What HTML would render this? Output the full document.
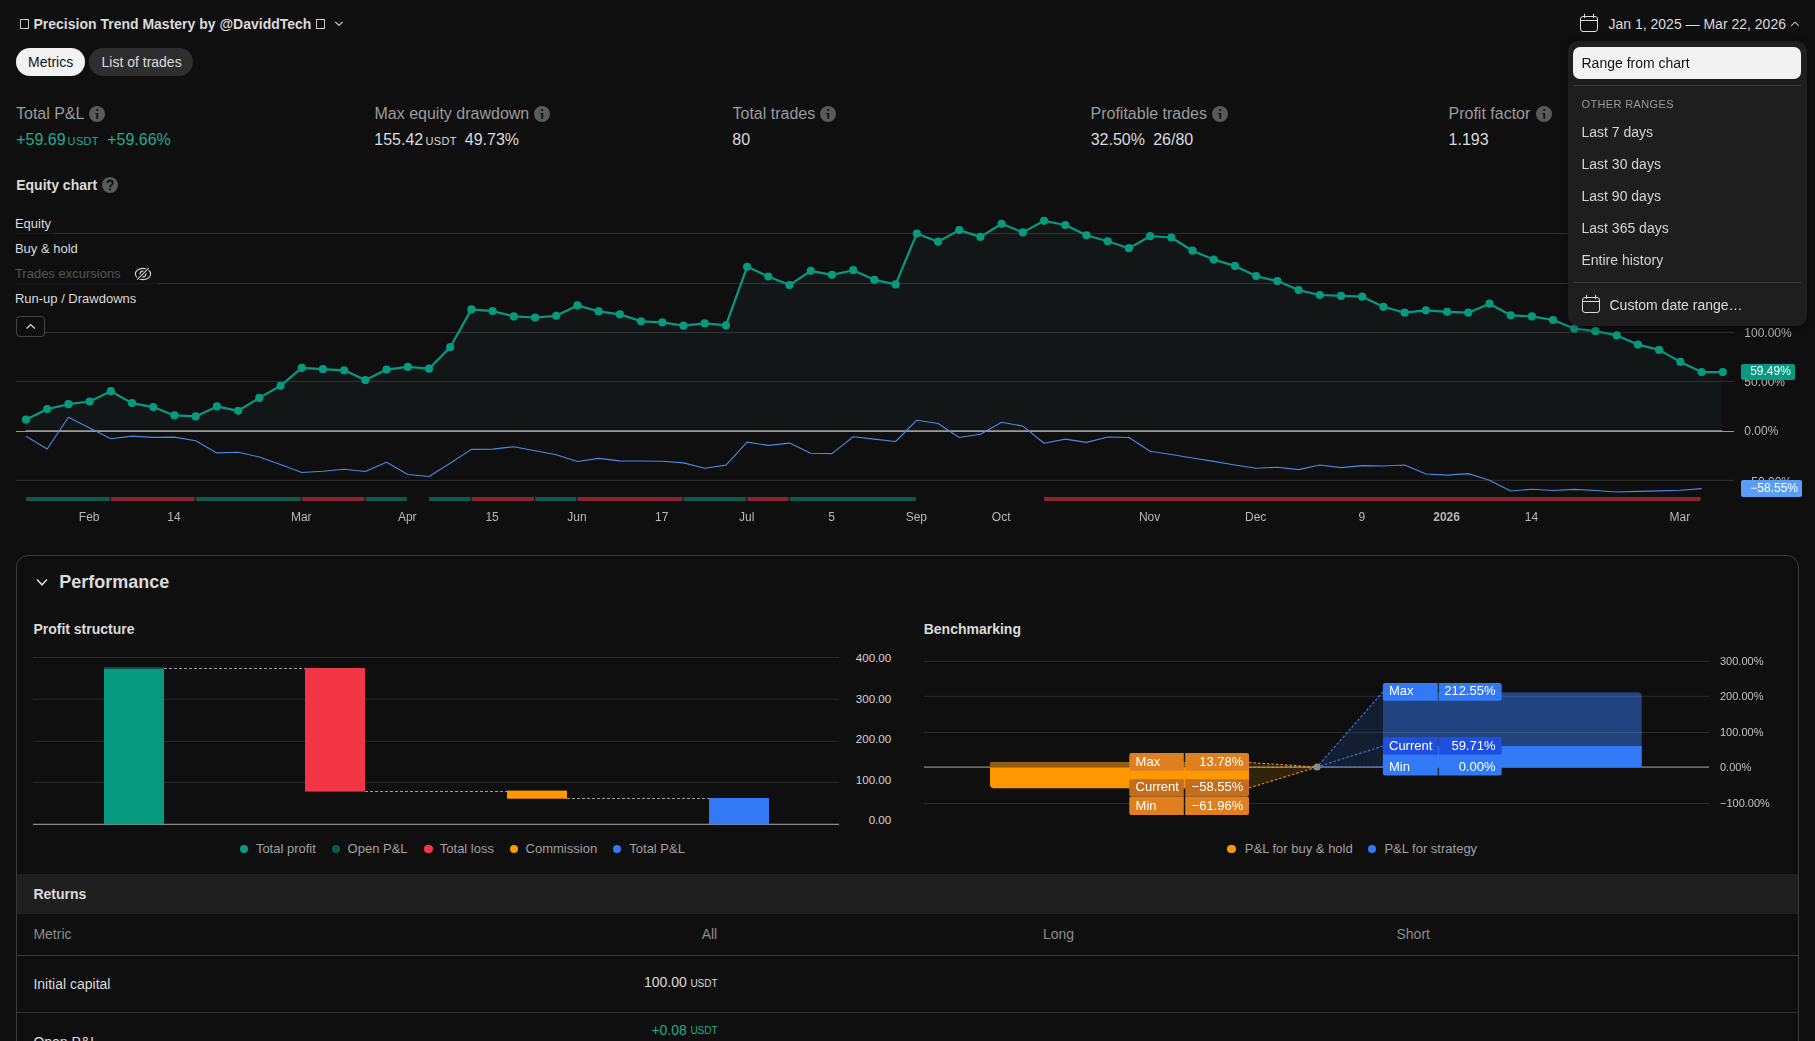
<!DOCTYPE html>
<html><head><meta charset="utf-8"><title>Strategy report</title>
<style>
html,body{margin:0;padding:0;}
body{width:1815px;height:1041px;overflow:hidden;background:#0f0f0f;position:relative;font-family:"Liberation Sans",sans-serif;}
.t{position:absolute;white-space:nowrap;}
svg{overflow:visible;}
</style></head><body>
<div style="position:absolute;left:20.00px;top:19.00px;width:9.00px;height:10.00px;background:transparent;box-sizing:border-box;border:1px solid #c8c8c8;"></div>
<div class="t" style="left:33.50px;top:16.65px;font-size:14px;line-height:14px;color:#dbdbdb;font-weight:700;">Precision Trend Mastery by @DaviddTech</div>
<div style="position:absolute;left:316.00px;top:19.00px;width:9.00px;height:10.00px;background:transparent;box-sizing:border-box;border:1px solid #c8c8c8;"></div>
<svg style="position:absolute;left:333px;top:19px" width="12" height="10" viewBox="0 0 12 10"><path d="M2.3 2.8 L6 6.5 L9.7 2.8" fill="none" stroke="#c8c8c8" stroke-width="1.2"/></svg>
<svg style="position:absolute;left:1580px;top:13px" width="20" height="20" viewBox="0 0 20 20"><rect x="0.5" y="3.5" width="17" height="15" rx="2.5" fill="none" stroke="#dcdcdc" stroke-width="1"/><path d="M0.5 7.5 H17.5 M4.5 0.8 V5 M13.5 0.8 V5" stroke="#dcdcdc" stroke-width="1"/></svg>
<div class="t" style="left:1608.50px;top:17.15px;font-size:14px;line-height:14px;color:#dbdbdb;">Jan 1, 2025 — Mar 22, 2026</div>
<svg style="position:absolute;left:1789px;top:19px" width="12" height="10" viewBox="0 0 12 10"><path d="M2.2 6.9 L6 3.2 L9.8 6.9" fill="none" stroke="#c4c4c4" stroke-width="1.1"/></svg>
<div style="position:absolute;left:16.00px;top:48.00px;width:69.00px;height:28.00px;background:#f2f2f2;border-radius:14px;"></div>
<div class="t" style="left:28.10px;top:55.15px;font-size:14px;line-height:14px;color:#131313;">Metrics</div>
<div style="position:absolute;left:89.00px;top:48.00px;width:104.00px;height:28.00px;background:#2e2e2e;border-radius:14px;"></div>
<div class="t" style="left:101.50px;top:55.15px;font-size:14px;line-height:14px;color:#dbdbdb;">List of trades</div>
<div class="t" style="left:16.00px;top:105.86px;font-size:16px;line-height:16px;color:#9b9b9b;white-space:nowrap;">Total P&amp;L</div>
<div class="t" style="left:374.50px;top:105.86px;font-size:16px;line-height:16px;color:#9b9b9b;white-space:nowrap;">Max equity drawdown</div>
<div class="t" style="left:732.50px;top:105.86px;font-size:16px;line-height:16px;color:#9b9b9b;white-space:nowrap;">Total trades</div>
<div class="t" style="left:1090.50px;top:105.86px;font-size:16px;line-height:16px;color:#9b9b9b;white-space:nowrap;">Profitable trades</div>
<div class="t" style="left:1448.50px;top:105.86px;font-size:16px;line-height:16px;color:#9b9b9b;white-space:nowrap;">Profit factor</div>
<svg style="position:absolute;left:88.80px;top:106.00px" width="16" height="16" viewBox="0 0 16 16"><circle cx="8" cy="8" r="8" fill="#5a5a5a"/><rect x="7.3" y="7" width="1.9" height="5.8" fill="#111"/><rect x="6.2" y="7" width="1.3" height="1.1" fill="#111"/><rect x="7.2" y="3.1" width="2" height="1.8" fill="#111"/></svg>
<svg style="position:absolute;left:533.80px;top:106.00px" width="16" height="16" viewBox="0 0 16 16"><circle cx="8" cy="8" r="8" fill="#5a5a5a"/><rect x="7.3" y="7" width="1.9" height="5.8" fill="#111"/><rect x="6.2" y="7" width="1.3" height="1.1" fill="#111"/><rect x="7.2" y="3.1" width="2" height="1.8" fill="#111"/></svg>
<svg style="position:absolute;left:820.00px;top:106.00px" width="16" height="16" viewBox="0 0 16 16"><circle cx="8" cy="8" r="8" fill="#5a5a5a"/><rect x="7.3" y="7" width="1.9" height="5.8" fill="#111"/><rect x="6.2" y="7" width="1.3" height="1.1" fill="#111"/><rect x="7.2" y="3.1" width="2" height="1.8" fill="#111"/></svg>
<svg style="position:absolute;left:1212.00px;top:106.00px" width="16" height="16" viewBox="0 0 16 16"><circle cx="8" cy="8" r="8" fill="#5a5a5a"/><rect x="7.3" y="7" width="1.9" height="5.8" fill="#111"/><rect x="6.2" y="7" width="1.3" height="1.1" fill="#111"/><rect x="7.2" y="3.1" width="2" height="1.8" fill="#111"/></svg>
<svg style="position:absolute;left:1536.20px;top:106.00px" width="16" height="16" viewBox="0 0 16 16"><circle cx="8" cy="8" r="8" fill="#5a5a5a"/><rect x="7.3" y="7" width="1.9" height="5.8" fill="#111"/><rect x="6.2" y="7" width="1.3" height="1.1" fill="#111"/><rect x="7.2" y="3.1" width="2" height="1.8" fill="#111"/></svg>
<div class="t" style="left:16.20px;top:131.66px;font-size:16px;line-height:16px;color:#22ab94;">+59.69</div>
<div class="t" style="left:67.60px;top:135.89px;font-size:11px;line-height:11px;color:#22ab94;letter-spacing:0.35px;">USDT</div>
<div class="t" style="left:107.20px;top:131.66px;font-size:16px;line-height:16px;color:#22ab94;">+59.66%</div>
<div class="t" style="left:374.30px;top:131.66px;font-size:16px;line-height:16px;color:#dbdbdb;">155.42</div>
<div class="t" style="left:425.50px;top:135.89px;font-size:11px;line-height:11px;color:#dbdbdb;letter-spacing:0.35px;">USDT</div>
<div class="t" style="left:464.80px;top:131.66px;font-size:16px;line-height:16px;color:#dbdbdb;">49.73%</div>
<div class="t" style="left:732.30px;top:131.66px;font-size:16px;line-height:16px;color:#dbdbdb;">80</div>
<div class="t" style="left:1090.70px;top:131.66px;font-size:16px;line-height:16px;color:#dbdbdb;">32.50%</div>
<div class="t" style="left:1153.20px;top:131.66px;font-size:16px;line-height:16px;color:#dbdbdb;">26/80</div>
<div class="t" style="left:1448.60px;top:131.66px;font-size:16px;line-height:16px;color:#dbdbdb;">1.193</div>
<div class="t" style="left:16.20px;top:177.75px;font-size:14px;line-height:14px;color:#dbdbdb;font-weight:700;">Equity chart</div>
<svg style="position:absolute;left:101.80px;top:177.30px" width="16" height="16" viewBox="0 0 16 16"><circle cx="8" cy="8" r="8" fill="#5a5a5a"/><path d="M5.5 6.1 C5.5 4.5 6.6 3.5 8.1 3.5 C9.6 3.5 10.7 4.5 10.7 5.9 C10.7 7.3 9.6 7.8 8.8 8.4 C8.2 8.8 8.1 9.2 8.1 10.3" fill="none" stroke="#111" stroke-width="1.8"/><rect x="7.1" y="11.4" width="2" height="1.9" fill="#111"/></svg>
<svg style="position:absolute;left:0;top:0" width="1815" height="1041"><line x1="16" y1="233.4" x2="1734" y2="233.4" stroke="#303030" stroke-width="1"/><line x1="16" y1="283.5" x2="1734" y2="283.5" stroke="#303030" stroke-width="1"/><line x1="16" y1="332.5" x2="1734" y2="332.5" stroke="#303030" stroke-width="1"/><line x1="16" y1="381.4" x2="1734" y2="381.4" stroke="#303030" stroke-width="1"/><line x1="16" y1="480.4" x2="1734" y2="480.4" stroke="#303030" stroke-width="1"/><polygon points="25.60,431 25.60,419.70 26.00,419.70 47.21,409.10 68.42,404.20 89.63,401.50 110.84,391.20 132.05,403.10 153.26,407.10 174.47,415.40 195.68,416.40 216.89,406.40 238.10,410.80 259.31,397.90 280.52,385.80 301.73,367.90 322.94,369.20 344.15,370.30 365.36,380.10 386.57,369.60 407.78,366.90 428.99,368.70 450.20,347.20 471.41,309.40 492.62,311.10 513.83,316.40 535.04,317.50 556.25,315.80 577.46,305.40 598.67,311.40 619.88,314.40 641.09,321.30 662.30,322.40 683.51,325.70 704.72,323.40 725.93,325.40 747.14,266.80 768.35,276.50 789.56,285.10 810.77,270.80 831.98,274.80 853.19,270.20 874.40,279.80 895.61,284.40 916.82,233.50 938.03,241.70 959.24,230.10 980.45,236.90 1001.66,223.80 1022.87,232.40 1044.08,220.80 1065.29,225.00 1086.50,235.30 1107.71,241.30 1128.92,248.20 1150.13,236.20 1171.34,237.50 1192.55,250.70 1213.76,259.60 1234.97,265.90 1256.18,276.10 1277.39,281.10 1298.60,290.10 1319.81,295.00 1341.02,295.90 1362.23,296.70 1383.44,306.80 1404.65,312.70 1425.86,310.30 1447.07,311.80 1468.28,312.70 1489.49,303.70 1510.70,315.30 1531.91,316.40 1553.12,320.00 1574.33,328.60 1595.54,331.20 1616.75,335.40 1637.96,344.60 1659.17,349.90 1680.38,361.90 1701.59,372.10 1722.80,372.10 1722.20,372.10 1722.20,431" fill="#4f8a80" fill-opacity="0.06"/><rect x="16" y="431" width="1718" height="1" fill="#999999"/><rect x="25.60" y="430" width="1696.60" height="1" fill="#7c7c7c"/><polyline points="26.00,436.30 47.21,449.00 68.42,417.30 89.63,428.10 110.84,438.70 132.05,436.10 153.26,437.40 174.47,437.10 195.68,440.70 216.89,452.90 238.10,452.20 259.31,457.00 280.52,464.60 301.73,472.50 322.94,471.20 344.15,469.20 365.36,471.50 386.57,462.20 407.78,474.50 428.99,476.50 450.20,463.30 471.41,449.40 492.62,449.10 513.83,446.70 535.04,450.70 556.25,454.70 577.46,461.50 598.67,458.40 619.88,460.90 641.09,461.00 662.30,461.30 683.51,462.90 704.72,468.20 725.93,465.10 747.14,442.10 768.35,445.40 789.56,443.10 810.77,453.20 831.98,453.60 853.19,436.70 874.40,439.10 895.61,441.50 916.82,420.20 938.03,423.50 959.24,437.50 980.45,434.20 1001.66,422.20 1022.87,426.10 1044.08,443.30 1065.29,439.10 1086.50,442.40 1107.71,437.00 1128.92,437.50 1150.13,451.20 1171.34,454.50 1192.55,458.00 1213.76,461.40 1234.97,465.00 1256.18,468.30 1277.39,467.30 1298.60,469.60 1319.81,465.00 1341.02,467.60 1362.23,465.60 1383.44,466.00 1404.65,465.00 1425.86,474.00 1447.07,475.10 1468.28,473.60 1489.49,480.20 1510.70,491.00 1531.91,489.20 1553.12,490.50 1574.33,489.40 1595.54,490.50 1616.75,492.00 1637.96,491.40 1659.17,490.90 1680.38,490.20 1701.59,488.60" fill="none" stroke="#4a8ae6" stroke-width="1.1" stroke-linejoin="round"/><polyline points="26.00,419.70 47.21,409.10 68.42,404.20 89.63,401.50 110.84,391.20 132.05,403.10 153.26,407.10 174.47,415.40 195.68,416.40 216.89,406.40 238.10,410.80 259.31,397.90 280.52,385.80 301.73,367.90 322.94,369.20 344.15,370.30 365.36,380.10 386.57,369.60 407.78,366.90 428.99,368.70 450.20,347.20 471.41,309.40 492.62,311.10 513.83,316.40 535.04,317.50 556.25,315.80 577.46,305.40 598.67,311.40 619.88,314.40 641.09,321.30 662.30,322.40 683.51,325.70 704.72,323.40 725.93,325.40 747.14,266.80 768.35,276.50 789.56,285.10 810.77,270.80 831.98,274.80 853.19,270.20 874.40,279.80 895.61,284.40 916.82,233.50 938.03,241.70 959.24,230.10 980.45,236.90 1001.66,223.80 1022.87,232.40 1044.08,220.80 1065.29,225.00 1086.50,235.30 1107.71,241.30 1128.92,248.20 1150.13,236.20 1171.34,237.50 1192.55,250.70 1213.76,259.60 1234.97,265.90 1256.18,276.10 1277.39,281.10 1298.60,290.10 1319.81,295.00 1341.02,295.90 1362.23,296.70 1383.44,306.80 1404.65,312.70 1425.86,310.30 1447.07,311.80 1468.28,312.70 1489.49,303.70 1510.70,315.30 1531.91,316.40 1553.12,320.00 1574.33,328.60 1595.54,331.20 1616.75,335.40 1637.96,344.60 1659.17,349.90 1680.38,361.90 1701.59,372.10 1722.80,372.10" fill="none" stroke="#089981" stroke-width="2.2" stroke-linejoin="round"/><circle cx="26.00" cy="419.70" r="4.1" fill="#089981"/><circle cx="47.21" cy="409.10" r="4.1" fill="#089981"/><circle cx="68.42" cy="404.20" r="4.1" fill="#089981"/><circle cx="89.63" cy="401.50" r="4.1" fill="#089981"/><circle cx="110.84" cy="391.20" r="4.1" fill="#089981"/><circle cx="132.05" cy="403.10" r="4.1" fill="#089981"/><circle cx="153.26" cy="407.10" r="4.1" fill="#089981"/><circle cx="174.47" cy="415.40" r="4.1" fill="#089981"/><circle cx="195.68" cy="416.40" r="4.1" fill="#089981"/><circle cx="216.89" cy="406.40" r="4.1" fill="#089981"/><circle cx="238.10" cy="410.80" r="4.1" fill="#089981"/><circle cx="259.31" cy="397.90" r="4.1" fill="#089981"/><circle cx="280.52" cy="385.80" r="4.1" fill="#089981"/><circle cx="301.73" cy="367.90" r="4.1" fill="#089981"/><circle cx="322.94" cy="369.20" r="4.1" fill="#089981"/><circle cx="344.15" cy="370.30" r="4.1" fill="#089981"/><circle cx="365.36" cy="380.10" r="4.1" fill="#089981"/><circle cx="386.57" cy="369.60" r="4.1" fill="#089981"/><circle cx="407.78" cy="366.90" r="4.1" fill="#089981"/><circle cx="428.99" cy="368.70" r="4.1" fill="#089981"/><circle cx="450.20" cy="347.20" r="4.1" fill="#089981"/><circle cx="471.41" cy="309.40" r="4.1" fill="#089981"/><circle cx="492.62" cy="311.10" r="4.1" fill="#089981"/><circle cx="513.83" cy="316.40" r="4.1" fill="#089981"/><circle cx="535.04" cy="317.50" r="4.1" fill="#089981"/><circle cx="556.25" cy="315.80" r="4.1" fill="#089981"/><circle cx="577.46" cy="305.40" r="4.1" fill="#089981"/><circle cx="598.67" cy="311.40" r="4.1" fill="#089981"/><circle cx="619.88" cy="314.40" r="4.1" fill="#089981"/><circle cx="641.09" cy="321.30" r="4.1" fill="#089981"/><circle cx="662.30" cy="322.40" r="4.1" fill="#089981"/><circle cx="683.51" cy="325.70" r="4.1" fill="#089981"/><circle cx="704.72" cy="323.40" r="4.1" fill="#089981"/><circle cx="725.93" cy="325.40" r="4.1" fill="#089981"/><circle cx="747.14" cy="266.80" r="4.1" fill="#089981"/><circle cx="768.35" cy="276.50" r="4.1" fill="#089981"/><circle cx="789.56" cy="285.10" r="4.1" fill="#089981"/><circle cx="810.77" cy="270.80" r="4.1" fill="#089981"/><circle cx="831.98" cy="274.80" r="4.1" fill="#089981"/><circle cx="853.19" cy="270.20" r="4.1" fill="#089981"/><circle cx="874.40" cy="279.80" r="4.1" fill="#089981"/><circle cx="895.61" cy="284.40" r="4.1" fill="#089981"/><circle cx="916.82" cy="233.50" r="4.1" fill="#089981"/><circle cx="938.03" cy="241.70" r="4.1" fill="#089981"/><circle cx="959.24" cy="230.10" r="4.1" fill="#089981"/><circle cx="980.45" cy="236.90" r="4.1" fill="#089981"/><circle cx="1001.66" cy="223.80" r="4.1" fill="#089981"/><circle cx="1022.87" cy="232.40" r="4.1" fill="#089981"/><circle cx="1044.08" cy="220.80" r="4.1" fill="#089981"/><circle cx="1065.29" cy="225.00" r="4.1" fill="#089981"/><circle cx="1086.50" cy="235.30" r="4.1" fill="#089981"/><circle cx="1107.71" cy="241.30" r="4.1" fill="#089981"/><circle cx="1128.92" cy="248.20" r="4.1" fill="#089981"/><circle cx="1150.13" cy="236.20" r="4.1" fill="#089981"/><circle cx="1171.34" cy="237.50" r="4.1" fill="#089981"/><circle cx="1192.55" cy="250.70" r="4.1" fill="#089981"/><circle cx="1213.76" cy="259.60" r="4.1" fill="#089981"/><circle cx="1234.97" cy="265.90" r="4.1" fill="#089981"/><circle cx="1256.18" cy="276.10" r="4.1" fill="#089981"/><circle cx="1277.39" cy="281.10" r="4.1" fill="#089981"/><circle cx="1298.60" cy="290.10" r="4.1" fill="#089981"/><circle cx="1319.81" cy="295.00" r="4.1" fill="#089981"/><circle cx="1341.02" cy="295.90" r="4.1" fill="#089981"/><circle cx="1362.23" cy="296.70" r="4.1" fill="#089981"/><circle cx="1383.44" cy="306.80" r="4.1" fill="#089981"/><circle cx="1404.65" cy="312.70" r="4.1" fill="#089981"/><circle cx="1425.86" cy="310.30" r="4.1" fill="#089981"/><circle cx="1447.07" cy="311.80" r="4.1" fill="#089981"/><circle cx="1468.28" cy="312.70" r="4.1" fill="#089981"/><circle cx="1489.49" cy="303.70" r="4.1" fill="#089981"/><circle cx="1510.70" cy="315.30" r="4.1" fill="#089981"/><circle cx="1531.91" cy="316.40" r="4.1" fill="#089981"/><circle cx="1553.12" cy="320.00" r="4.1" fill="#089981"/><circle cx="1574.33" cy="328.60" r="4.1" fill="#089981"/><circle cx="1595.54" cy="331.20" r="4.1" fill="#089981"/><circle cx="1616.75" cy="335.40" r="4.1" fill="#089981"/><circle cx="1637.96" cy="344.60" r="4.1" fill="#089981"/><circle cx="1659.17" cy="349.90" r="4.1" fill="#089981"/><circle cx="1680.38" cy="361.90" r="4.1" fill="#089981"/><circle cx="1701.59" cy="372.10" r="4.1" fill="#089981"/><circle cx="1722.80" cy="372.10" r="4.1" fill="#089981"/><rect x="26.10" y="497" width="83.74" height="4" fill="#0c5a4e"/><rect x="110.94" y="497" width="83.74" height="4" fill="#892530"/><rect x="195.78" y="497" width="104.95" height="4" fill="#0c5a4e"/><rect x="301.83" y="497" width="62.53" height="4" fill="#892530"/><rect x="365.46" y="497" width="41.32" height="4" fill="#0c5a4e"/><rect x="429.09" y="497" width="41.32" height="4" fill="#0c5a4e"/><rect x="471.51" y="497" width="62.53" height="4" fill="#892530"/><rect x="535.14" y="497" width="41.32" height="4" fill="#0c5a4e"/><rect x="577.56" y="497" width="104.95" height="4" fill="#892530"/><rect x="683.61" y="497" width="62.53" height="4" fill="#0c5a4e"/><rect x="747.24" y="497" width="41.32" height="4" fill="#892530"/><rect x="789.66" y="497" width="126.16" height="4" fill="#0c5a4e"/><rect x="1044.18" y="497" width="656.41" height="4" fill="#892530"/></svg>
<div style="position:absolute;left:14.00px;top:212.00px;width:41.00px;height:22.00px;background:rgba(15,15,15,0.6);"></div>
<div class="t" style="left:14.90px;top:217.00px;font-size:13px;line-height:13px;color:#dbdbdb;">Equity</div>
<div style="position:absolute;left:14.00px;top:237.00px;width:56.00px;height:21.00px;background:rgba(15,15,15,0.6);"></div>
<div class="t" style="left:14.90px;top:241.50px;font-size:13px;line-height:13px;color:#dbdbdb;">Buy &amp; hold</div>
<div style="position:absolute;left:14.00px;top:262.00px;width:143.00px;height:22.00px;background:rgba(15,15,15,0.6);"></div>
<div class="t" style="left:14.90px;top:266.80px;font-size:13px;line-height:13px;color:#555555;">Trades excursions</div>
<svg style="position:absolute;left:133px;top:266px" width="20" height="16" viewBox="0 0 20 16"><ellipse cx="10" cy="8" rx="7.6" ry="5.6" fill="none" stroke="#d4d4d4" stroke-width="1.1"/><circle cx="10" cy="8" r="2.9" fill="none" stroke="#d4d4d4" stroke-width="1.1"/><path d="M4.2 13.6 L15.7 2.1" stroke="#0f0f0f" stroke-width="3"/><path d="M4.2 13.6 L15.7 2.1" stroke="#d4d4d4" stroke-width="1.1"/></svg>
<div style="position:absolute;left:14.00px;top:287.00px;width:126.00px;height:21.00px;background:rgba(15,15,15,0.6);"></div>
<div class="t" style="left:14.90px;top:292.00px;font-size:13px;line-height:13px;color:#dbdbdb;">Run-up / Drawdowns</div>
<div style="position:absolute;left:16.00px;top:316.40px;width:29.00px;height:20.20px;background:#0f0f0f;box-sizing:border-box;border:1px solid #444;border-radius:4px;"></div>
<svg style="position:absolute;left:24px;top:320px" width="14" height="12" viewBox="0 0 14 12"><path d="M2.6 8.5 L6.7 4.6 L10.8 8.5" fill="none" stroke="#d8d8d8" stroke-width="1.25"/></svg>
<div style="position:absolute;left:16.00px;top:555.00px;width:1783.20px;height:545.00px;background:transparent;box-sizing:border-box;border:1px solid #3a3a3a;border-radius:12px;"></div>
<svg style="position:absolute;left:34px;top:575px" width="16" height="14" viewBox="0 0 16 14"><path d="M3 4.6 L8 9.8 L13 4.6" fill="none" stroke="#dcdcdc" stroke-width="1.5"/></svg>
<div class="t" style="left:59.30px;top:572.66px;font-size:18px;line-height:18px;color:#dbdbdb;font-weight:700;">Performance</div>
<div class="t" style="left:33.40px;top:621.85px;font-size:14px;line-height:14px;color:#dbdbdb;font-weight:700;">Profit structure</div>
<div class="t" style="left:923.70px;top:622.15px;font-size:14px;line-height:14px;color:#dbdbdb;font-weight:700;">Benchmarking</div>
<svg style="position:absolute;left:0;top:0" width="1815" height="1041"><line x1="33" y1="657.5" x2="839" y2="657.5" stroke="#2a2a2a" stroke-width="1"/><line x1="33" y1="699.2" x2="839" y2="699.2" stroke="#2a2a2a" stroke-width="1"/><line x1="33" y1="741.3" x2="839" y2="741.3" stroke="#2a2a2a" stroke-width="1"/><line x1="33" y1="782.3" x2="839" y2="782.3" stroke="#2a2a2a" stroke-width="1"/><line x1="33" y1="824.3" x2="839" y2="824.3" stroke="#8a8a8a" stroke-width="1.2"/><rect x="104" y="667" width="60" height="157.3" fill="#089981"/><rect x="104" y="667" width="60" height="2" fill="#025244"/><rect x="305" y="668" width="60" height="123.6" fill="#f23645"/><rect x="507" y="790.6" width="60" height="8.1" fill="#ff9800"/><rect x="709" y="798" width="60" height="26.3" fill="#3179f5"/><line x1="164" y1="668.5" x2="305" y2="668.5" stroke="#9a9a9a" stroke-width="1" stroke-dasharray="3,2"/><line x1="365" y1="791.5" x2="507" y2="791.5" stroke="#9a9a9a" stroke-width="1" stroke-dasharray="3,2"/><line x1="567" y1="798.5" x2="709" y2="798.5" stroke="#9a9a9a" stroke-width="1" stroke-dasharray="3,2"/><line x1="924" y1="661.3" x2="1709" y2="661.3" stroke="#2a2a2a" stroke-width="1"/><line x1="924" y1="696.3" x2="1709" y2="696.3" stroke="#2a2a2a" stroke-width="1"/><line x1="924" y1="732.5" x2="1709" y2="732.5" stroke="#2a2a2a" stroke-width="1"/><line x1="924" y1="803.5" x2="1709" y2="803.5" stroke="#2a2a2a" stroke-width="1"/><line x1="924" y1="767.2" x2="1709" y2="767.2" stroke="#8a8a8a" stroke-width="1.2"/><polygon points="1249,762.3 1249,788.2 1317,767" fill="#ff9800" fill-opacity="0.15"/><polygon points="1383,691.6 1383,767.2 1317,767" fill="#3179f5" fill-opacity="0.15"/><path d="M994,762.2 H1249 V788.2 H994 A4,4 0 0 1 990,784.2 V766.2 A4,4 0 0 1 994,762.2 Z" fill="#ff9800"/><rect x="990" y="762.2" width="259" height="5.3" fill="#8f5a12"/><path d="M1383,692.2 H1637.7 A4,4 0 0 1 1641.7,696.2 V767.2 H1383 Z" fill="#22447e"/><rect x="1383" y="746" width="258.7" height="21.2" fill="#3179f5"/><line x1="1383" y1="696.3" x2="1641.7" y2="696.3" stroke="#ffffff" stroke-opacity="0.1" stroke-width="1"/><line x1="1383" y1="732.5" x2="1641.7" y2="732.5" stroke="#ffffff" stroke-opacity="0.1" stroke-width="1"/><g stroke-dasharray="2.5,2" stroke-width="1.2" fill="none"><line x1="1249" y1="762.5" x2="1317" y2="767" stroke="#e0861e"/><line x1="1249" y1="767.5" x2="1317" y2="767" stroke="#e0861e"/><line x1="1249" y1="788" x2="1317" y2="767" stroke="#e0861e"/><line x1="1383" y1="691.8" x2="1317" y2="767" stroke="#3b78e0"/><line x1="1383" y1="746" x2="1317" y2="767" stroke="#3b78e0"/><line x1="1383" y1="767" x2="1317" y2="767" stroke="#3b78e0"/></g><circle cx="1317" cy="767" r="3.6" fill="#8a8a8a"/><path d="M1131.3,752.9 H1183.8 V770.7 H1131.3 A2,2 0 0 1 1129.3,768.7 V754.9 A2,2 0 0 1 1131.3,752.9 Z" fill="#e07f1f"/><path d="M1185.2,752.9 H1247 A2,2 0 0 1 1249,754.9 V768.7 A2,2 0 0 1 1247,770.7 H1185.2 Z" fill="#e07f1f"/><path d="M1131.3,779.3 H1183.8 V796.5 H1131.3 A2,2 0 0 1 1129.3,794.5 V781.3 A2,2 0 0 1 1131.3,779.3 Z" fill="#c36e1c"/><path d="M1185.2,779.3 H1247 A2,2 0 0 1 1249,781.3 V794.5 A2,2 0 0 1 1247,796.5 H1185.2 Z" fill="#c36e1c"/><path d="M1131.3,796.5 H1183.8 V815 H1131.3 A2,2 0 0 1 1129.3,813 V798.5 A2,2 0 0 1 1131.3,796.5 Z" fill="#e07f1f"/><path d="M1185.2,796.5 H1247 A2,2 0 0 1 1249,798.5 V813 A2,2 0 0 1 1247,815 H1185.2 Z" fill="#e07f1f"/><path d="M1384.9,682.9 H1437.8 V700.7 H1384.9 A2,2 0 0 1 1382.9,698.7 V684.9 A2,2 0 0 1 1384.9,682.9 Z" fill="#3179f5"/><path d="M1438.8,682.9 H1499.7 A2,2 0 0 1 1501.7,684.9 V698.7 A2,2 0 0 1 1499.7,700.7 H1438.8 Z" fill="#3179f5"/><path d="M1384.9,737 H1437.8 V754.7 H1384.9 A2,2 0 0 1 1382.9,752.7 V739 A2,2 0 0 1 1384.9,737 Z" fill="#1f4fe0"/><path d="M1438.8,737 H1499.7 A2,2 0 0 1 1501.7,739 V752.7 A2,2 0 0 1 1499.7,754.7 H1438.8 Z" fill="#1f4fe0"/><path d="M1384.9,754.7 H1437.8 V775.5 H1384.9 A2,2 0 0 1 1382.9,773.5 V756.7 A2,2 0 0 1 1384.9,754.7 Z" fill="#3179f5"/><path d="M1438.8,754.7 H1499.7 A2,2 0 0 1 1501.7,756.7 V773.5 A2,2 0 0 1 1499.7,775.5 H1438.8 Z" fill="#3179f5"/></svg>
<div class="t" style="left:-108.80px;width:1000px;text-align:right;top:651.78px;font-size:11.6px;line-height:11.6px;color:#d4d4d4;">400.00</div>
<div class="t" style="left:-108.80px;width:1000px;text-align:right;top:692.78px;font-size:11.6px;line-height:11.6px;color:#d4d4d4;">300.00</div>
<div class="t" style="left:-108.80px;width:1000px;text-align:right;top:732.78px;font-size:11.6px;line-height:11.6px;color:#d4d4d4;">200.00</div>
<div class="t" style="left:-108.80px;width:1000px;text-align:right;top:773.78px;font-size:11.6px;line-height:11.6px;color:#d4d4d4;">100.00</div>
<div class="t" style="left:-108.80px;width:1000px;text-align:right;top:813.78px;font-size:11.6px;line-height:11.6px;color:#d4d4d4;">0.00</div>
<div style="position:absolute;left:239.50px;top:844.50px;width:8.60px;height:8.60px;background:#089981;border-radius:50%;"></div>
<div class="t" style="left:255.90px;top:842.20px;font-size:13px;line-height:13px;color:#a0a0a0;">Total profit</div>
<div style="position:absolute;left:331.60px;top:844.50px;width:8.60px;height:8.60px;background:#0a5a4d;border-radius:50%;"></div>
<div class="t" style="left:347.60px;top:842.20px;font-size:13px;line-height:13px;color:#a0a0a0;">Open P&amp;L</div>
<div style="position:absolute;left:424.00px;top:844.50px;width:8.60px;height:8.60px;background:#f23645;border-radius:50%;"></div>
<div class="t" style="left:439.80px;top:842.20px;font-size:13px;line-height:13px;color:#a0a0a0;">Total loss</div>
<div style="position:absolute;left:509.50px;top:844.50px;width:8.60px;height:8.60px;background:#ff9800;border-radius:50%;"></div>
<div class="t" style="left:525.60px;top:842.20px;font-size:13px;line-height:13px;color:#a0a0a0;">Commission</div>
<div style="position:absolute;left:612.60px;top:844.50px;width:8.60px;height:8.60px;background:#3179f5;border-radius:50%;"></div>
<div class="t" style="left:629.30px;top:842.20px;font-size:13px;line-height:13px;color:#a0a0a0;">Total P&amp;L</div>
<div style="position:absolute;left:1227.40px;top:844.50px;width:8.60px;height:8.60px;background:#ff9800;border-radius:50%;"></div>
<div class="t" style="left:1244.80px;top:842.20px;font-size:13px;line-height:13px;color:#a0a0a0;">P&amp;L for buy &amp; hold</div>
<div style="position:absolute;left:1367.50px;top:844.50px;width:8.60px;height:8.60px;background:#3179f5;border-radius:50%;"></div>
<div class="t" style="left:1384.40px;top:842.20px;font-size:13px;line-height:13px;color:#a0a0a0;">P&amp;L for strategy</div>
<div style="position:absolute;left:17.00px;top:874.00px;width:1781.20px;height:40.00px;background:#1f1f1f;"></div>
<div class="t" style="left:33.40px;top:887.15px;font-size:14px;line-height:14px;color:#dbdbdb;font-weight:700;">Returns</div>
<div class="t" style="left:33.40px;top:927.15px;font-size:14px;line-height:14px;color:#8c8c8c;">Metric</div>
<div class="t" style="left:-282.80px;width:1000px;text-align:right;top:927.15px;font-size:14px;line-height:14px;color:#8c8c8c;">All</div>
<div class="t" style="left:1043.00px;top:927.15px;font-size:14px;line-height:14px;color:#8c8c8c;">Long</div>
<div class="t" style="left:1396.50px;top:927.15px;font-size:14px;line-height:14px;color:#8c8c8c;">Short</div>
<div style="position:absolute;left:17.00px;top:955.00px;width:1781.20px;height:1.00px;background:#3a3a3a;"></div>
<div class="t" style="left:33.40px;top:977.15px;font-size:14px;line-height:14px;color:#dbdbdb;">Initial capital</div>
<div class="t" style="left:-313.20px;width:1000px;text-align:right;top:975.15px;font-size:14px;line-height:14px;color:#dbdbdb;">100.00</div>
<div class="t" style="left:690.40px;top:978.53px;font-size:10px;line-height:10px;color:#dbdbdb;">USDT</div>
<div style="position:absolute;left:17.00px;top:1012.00px;width:1781.20px;height:1.00px;background:#2e2e2e;"></div>
<div class="t" style="left:33.40px;top:1034.65px;font-size:14px;line-height:14px;color:#dbdbdb;">Open P&amp;L</div>
<div class="t" style="left:-313.20px;width:1000px;text-align:right;top:1022.55px;font-size:14px;line-height:14px;color:#22ab94;">+0.08</div>
<div class="t" style="left:690.40px;top:1025.94px;font-size:10px;line-height:10px;color:#22ab94;">USDT</div>
<div style="position:absolute;left:0;top:0;width:0;height:0;will-change:transform;">
<div class="t" style="left:-410.87px;width:1000px;text-align:center;top:511.34px;font-size:12px;line-height:12px;color:#b8b8b8;">Feb</div>
<div class="t" style="left:-326.03px;width:1000px;text-align:center;top:511.34px;font-size:12px;line-height:12px;color:#b8b8b8;">14</div>
<div class="t" style="left:-198.77px;width:1000px;text-align:center;top:511.34px;font-size:12px;line-height:12px;color:#b8b8b8;">Mar</div>
<div class="t" style="left:-92.72px;width:1000px;text-align:center;top:511.34px;font-size:12px;line-height:12px;color:#b8b8b8;">Apr</div>
<div class="t" style="left:-7.88px;width:1000px;text-align:center;top:511.34px;font-size:12px;line-height:12px;color:#b8b8b8;">15</div>
<div class="t" style="left:76.96px;width:1000px;text-align:center;top:511.34px;font-size:12px;line-height:12px;color:#b8b8b8;">Jun</div>
<div class="t" style="left:161.80px;width:1000px;text-align:center;top:511.34px;font-size:12px;line-height:12px;color:#b8b8b8;">17</div>
<div class="t" style="left:246.64px;width:1000px;text-align:center;top:511.34px;font-size:12px;line-height:12px;color:#b8b8b8;">Jul</div>
<div class="t" style="left:331.48px;width:1000px;text-align:center;top:511.34px;font-size:12px;line-height:12px;color:#b8b8b8;">5</div>
<div class="t" style="left:416.32px;width:1000px;text-align:center;top:511.34px;font-size:12px;line-height:12px;color:#b8b8b8;">Sep</div>
<div class="t" style="left:501.16px;width:1000px;text-align:center;top:511.34px;font-size:12px;line-height:12px;color:#b8b8b8;">Oct</div>
<div class="t" style="left:649.63px;width:1000px;text-align:center;top:511.34px;font-size:12px;line-height:12px;color:#b8b8b8;">Nov</div>
<div class="t" style="left:755.68px;width:1000px;text-align:center;top:511.34px;font-size:12px;line-height:12px;color:#b8b8b8;">Dec</div>
<div class="t" style="left:861.73px;width:1000px;text-align:center;top:511.34px;font-size:12px;line-height:12px;color:#b8b8b8;">9</div>
<div class="t" style="left:1031.41px;width:1000px;text-align:center;top:511.34px;font-size:12px;line-height:12px;color:#b8b8b8;">14</div>
<div class="t" style="left:1179.88px;width:1000px;text-align:center;top:511.34px;font-size:12px;line-height:12px;color:#b8b8b8;">Mar</div>
<div class="t" style="left:946.57px;width:1000px;text-align:center;top:511.34px;font-size:12px;line-height:12px;color:#b8b8b8;font-weight:700;">2026</div>
<div class="t" style="left:1744.30px;top:327.04px;font-size:12px;line-height:12px;color:#b8b8b8;">100.00%</div>
<div class="t" style="left:1744.30px;top:376.04px;font-size:12px;line-height:12px;color:#b8b8b8;">50.00%</div>
<div class="t" style="left:1744.30px;top:424.84px;font-size:12px;line-height:12px;color:#b8b8b8;">0.00%</div>
<div class="t" style="left:1744.30px;top:475.84px;font-size:12px;line-height:12px;color:#b8b8b8;">−50.00%</div>
<div style="position:absolute;left:1741.20px;top:363.80px;width:53.70px;height:16.60px;background:#089981;border-radius:2px;"></div>
<div class="t" style="left:1750.20px;top:364.94px;font-size:12px;line-height:12px;color:#ffffff;">59.49%</div>
<div style="position:absolute;left:1741.20px;top:480.30px;width:60.70px;height:16.40px;background:#5b9cf6;border-radius:2px;"></div>
<div class="t" style="left:1750.30px;top:481.74px;font-size:12px;line-height:12px;color:#ffffff;">−58.55%</div>
</div>
<div style="position:absolute;left:0;top:0;width:0;height:0;will-change:transform;">
<div class="t" style="left:1135.60px;top:755.00px;font-size:13px;line-height:13px;color:#ffffff;">Max</div>
<div class="t" style="left:243.30px;width:1000px;text-align:right;top:755.00px;font-size:13px;line-height:13px;color:#ffffff;">13.78%</div>
<div class="t" style="left:1135.60px;top:780.30px;font-size:13px;line-height:13px;color:#ffffff;">Current</div>
<div class="t" style="left:243.30px;width:1000px;text-align:right;top:780.30px;font-size:13px;line-height:13px;color:#ffffff;">−58.55%</div>
<div class="t" style="left:1135.60px;top:799.00px;font-size:13px;line-height:13px;color:#ffffff;">Min</div>
<div class="t" style="left:243.30px;width:1000px;text-align:right;top:799.00px;font-size:13px;line-height:13px;color:#ffffff;">−61.96%</div>
<div class="t" style="left:1720.00px;top:656.19px;font-size:11px;line-height:11px;color:#c4c4c4;">300.00%</div>
<div class="t" style="left:1720.00px;top:691.19px;font-size:11px;line-height:11px;color:#c4c4c4;">200.00%</div>
<div class="t" style="left:1720.00px;top:727.39px;font-size:11px;line-height:11px;color:#c4c4c4;">100.00%</div>
<div class="t" style="left:1720.00px;top:762.09px;font-size:11px;line-height:11px;color:#c4c4c4;">0.00%</div>
<div class="t" style="left:1720.00px;top:798.29px;font-size:11px;line-height:11px;color:#c4c4c4;">−100.00%</div>
<div class="t" style="left:1389.00px;top:684.10px;font-size:13px;line-height:13px;color:#ffffff;">Max</div>
<div class="t" style="left:495.50px;width:1000px;text-align:right;top:684.10px;font-size:13px;line-height:13px;color:#ffffff;">212.55%</div>
<div class="t" style="left:1389.00px;top:739.00px;font-size:13px;line-height:13px;color:#ffffff;">Current</div>
<div class="t" style="left:495.50px;width:1000px;text-align:right;top:739.00px;font-size:13px;line-height:13px;color:#ffffff;">59.71%</div>
<div class="t" style="left:1389.00px;top:759.80px;font-size:13px;line-height:13px;color:#ffffff;">Min</div>
<div class="t" style="left:495.50px;width:1000px;text-align:right;top:759.80px;font-size:13px;line-height:13px;color:#ffffff;">0.00%</div>
</div>
<div style="position:absolute;left:0;top:0;width:0;height:0;will-change:transform;">
<div style="position:absolute;left:1567.70px;top:41.00px;width:238.90px;height:285.40px;background:#1e1e1e;border-radius:10px;box-shadow:0 2px 8px rgba(0,0,0,0.4);"></div>
<div style="position:absolute;left:1573.10px;top:47.10px;width:227.90px;height:31.80px;background:#f2f2f2;border-radius:7px;"></div>
<div class="t" style="left:1581.50px;top:56.05px;font-size:14px;line-height:14px;color:#131313;">Range from chart</div>
<div style="position:absolute;left:1573.10px;top:85.00px;width:227.90px;height:1.00px;background:#3a3a3a;"></div>
<div class="t" style="left:1581.50px;top:98.69px;font-size:11px;line-height:11px;color:#9a9a9a;letter-spacing:0.36px;">OTHER RANGES</div>
<div class="t" style="left:1581.50px;top:124.95px;font-size:14px;line-height:14px;color:#d4d4d4;">Last 7 days</div>
<div class="t" style="left:1581.50px;top:156.95px;font-size:14px;line-height:14px;color:#d4d4d4;">Last 30 days</div>
<div class="t" style="left:1581.50px;top:188.95px;font-size:14px;line-height:14px;color:#d4d4d4;">Last 90 days</div>
<div class="t" style="left:1581.50px;top:220.95px;font-size:14px;line-height:14px;color:#d4d4d4;">Last 365 days</div>
<div class="t" style="left:1581.50px;top:252.95px;font-size:14px;line-height:14px;color:#d4d4d4;">Entire history</div>
<div style="position:absolute;left:1573.10px;top:281.60px;width:227.90px;height:1.00px;background:#3a3a3a;"></div>
<svg style="position:absolute;left:1582px;top:294px" width="20" height="20" viewBox="0 0 20 20"><rect x="0.5" y="3.5" width="17" height="15" rx="2.5" fill="none" stroke="#dcdcdc" stroke-width="1"/><path d="M0.5 7.5 H17.5 M4.5 0.8 V5 M13.5 0.8 V5" stroke="#dcdcdc" stroke-width="1"/></svg>
<div class="t" style="left:1609.50px;top:297.65px;font-size:14px;line-height:14px;color:#dbdbdb;">Custom date range…</div>
</div>
</body></html>
